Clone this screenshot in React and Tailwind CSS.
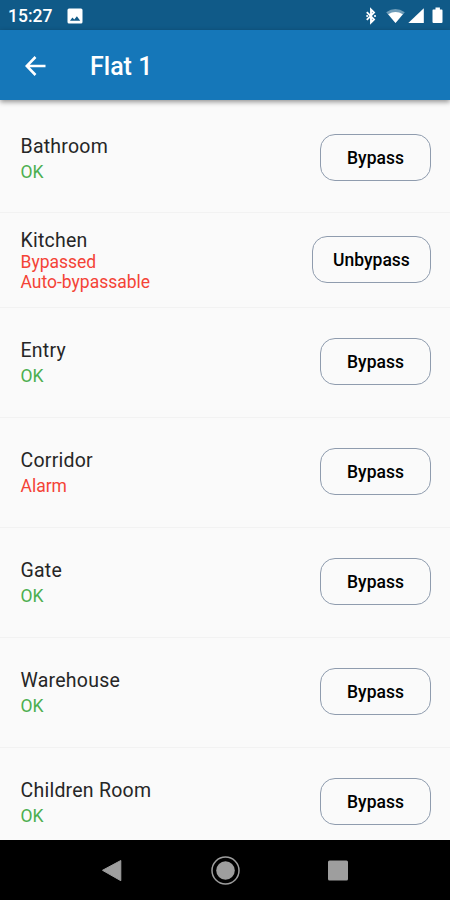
const zones = [
  { name: "Bathroom", status: ["OK"], tone: "ok", action: "Bypass" },
  { name: "Kitchen", status: ["Bypassed", "Auto-bypassable"], tone: "bad", action: "Unbypass" },
  { name: "Entry", status: ["OK"], tone: "ok", action: "Bypass" },
  { name: "Corridor", status: ["Alarm"], tone: "bad", action: "Bypass" },
  { name: "Gate", status: ["OK"], tone: "ok", action: "Bypass" },
  { name: "Warehouse", status: ["OK"], tone: "ok", action: "Bypass" },
  { name: "Children Room", status: ["OK"], tone: "ok", action: "Bypass" },
];

function StatusBar() {
  return (
    <div className="flex h-[30px] shrink-0 items-center bg-[#105a88] pt-[2px] pr-[7px] pl-[8px] text-white">
      <span className="w-[59px] pt-[2px] text-[17.5px] leading-none font-medium">15:27</span>
      <svg className="h-4 w-4" viewBox="0 0 16 16" fill="currentColor">
        <path fillRule="evenodd" d="M2 0.5H14A1.5 1.5 0 0 1 15.5 2V14A1.5 1.5 0 0 1 14 15.5H2A1.5 1.5 0 0 1 .5 14V2A1.5 1.5 0 0 1 2 .5ZM3 12.8H13.2L9.9 8.3L7.3 11.5L5.4 9.4Z" />
      </svg>
      <svg className="ml-auto h-[18px] w-[80px]" viewBox="0 0 80 18">
        <path d="M3.8 5.2 11 12.4 8 15.4V2.6L11 5.6 3.8 12.8" fill="none" stroke="#fff" strokeWidth="1.9" />
        <circle cx="4.2" cy="9" r="1.1" fill="#fff" />
        <circle cx="12" cy="9" r="1.1" fill="#fff" />
        <path d="M23.2 5.2Q32.2-1 41.8 5.2L32.5 16Z" fill="#6f9db9" />
        <path d="M25.2 7.2Q32.5 2.6 39.8 7.2L32.5 16Z" fill="#fff" />
        <path d="M45.3 16 60.8 1.2V16Z" fill="#fff" />
        <path d="M70.1 2.5H72.5V.5H76.9V2.5H78.8Q79.5 2.5 79.5 3.4V15.1Q79.5 16 78.5 16H70.5Q69.5 16 69.5 15.1V3.4Q69.5 2.5 70.1 2.5Z" fill="#fff" />
      </svg>
    </div>
  );
}

function Header() {
  return (
    <header className="z-10 flex h-[70px] shrink-0 items-center bg-[#1577b9] pt-px pl-[25px] text-white shadow-[0_2px_5px_rgba(0,0,0,0.42)]">
      <svg className="h-[20px] w-[21px]" viewBox="0 0 21 20" fill="none" stroke="currentColor" strokeWidth="2.6">
        <path d="M20.5 10H2.5M10.5 1 1.7 10 10.5 19" />
      </svg>
      <h1 className="ml-[44px] pt-[2px] text-[25px] leading-none font-medium">Flat 1</h1>
    </header>
  );
}

function ZoneRow({ zone }) {
  const multi = zone.status.length > 1;
  return (
    <li className={`group flex shrink-0 items-center justify-between border-b border-[#f2f2f2] pr-[19px] pl-[20.5px] first:h-[109px] ${multi ? "h-[95px]" : "h-[110px]"}`}>
      <div className={multi ? "pt-[2px]" : "group-first:pt-[2px]"}>
        <div className={`text-[19.5px] leading-[22px] tracking-[0.24px] text-[#262626] ${multi ? "" : "mb-[4px]"}`}>{zone.name}</div>
        {zone.status.map((s) => (
          <div key={s} className={`text-[17.5px] leading-[20px] ${zone.tone === "ok" ? "text-[#4caf50]" : "text-[#f44336]"}`}>{s}</div>
        ))}
      </div>
      <button className={`mb-[2px] h-[47px] rounded-[15px] border border-[#8f9cae] pt-[2px] text-[17.5px] font-medium text-black ${multi ? "w-[119px]" : "w-[111px]"}`}>{zone.action}</button>
    </li>
  );
}

function NavBar() {
  return (
    <nav className="flex h-[60px] shrink-0 items-center justify-center bg-black">
      <svg className="h-[30px] w-[250px]" viewBox="0 0 250 30" fill="#9e9e9e">
        <path d="M2.5 15.3 20.8 5.5V25.7Z" stroke="#9e9e9e" strokeLinejoin="round" />
        <circle cx="125.5" cy="15.5" r="9.3" />
        <circle cx="125.5" cy="15.5" r="13.5" fill="none" stroke="#9e9e9e" strokeWidth="1.5" />
        <rect x="228" y="5.5" width="20" height="20" rx="1.5" />
      </svg>
    </nav>
  );
}

export default function App() {
  return (
    <div className="flex h-[900px] w-[450px] flex-col overflow-hidden bg-[#fafafa] font-['Roboto',sans-serif]">
      <StatusBar />
      <Header />
      <ul className="flex min-h-0 flex-1 flex-col overflow-hidden pt-[4px]">
        {zones.map((zone) => (
          <ZoneRow key={zone.name} zone={zone} />
        ))}
      </ul>
      <NavBar />
    </div>
  );
}
